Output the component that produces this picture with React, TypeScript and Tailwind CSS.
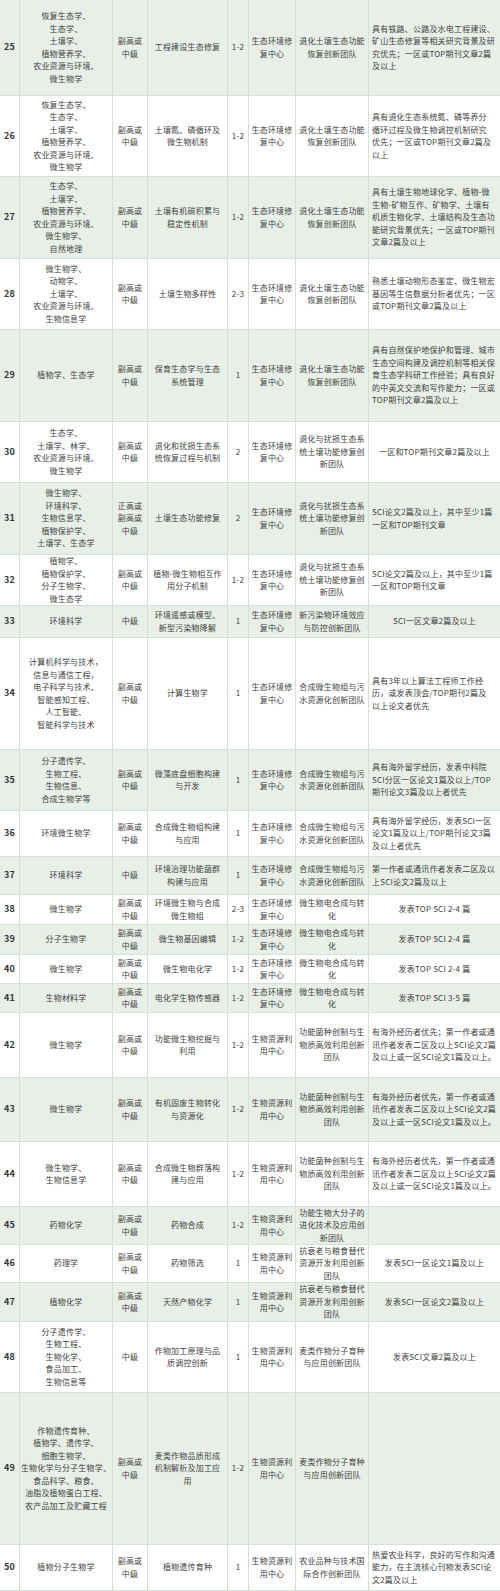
import React from "react";

type Row = {
  n: string;
  h: string;
  c: string[][]; // 7 columns after the number
};

const ZX = ["生态环境修", "复中心"];
const SW = ["生物资源利", "用中心"];
const FG = ["副高或", "中级"];
const TH = ["退化土壤生态功能", "恢复创新团队"];
const TR = ["退化与扰损生态系", "统土壤功能修复创", "新团队"];
const HW = ["合成微生物组与污", "水资源化创新团队"];
const DH = ["微生物电合成与转", "化"];
const GN = ["功能菌种创制与生", "物质高效利用创新", "团队"];
const KS = ["抗衰老与粮食替代", "资源开发利用创新", "团队"];
const MS = ["麦类作物分子育种", "与应用创新团队"];
const HAIWAI = ["有海外经历者优先，第一作者或通", "讯作者发表二区及以上SCI论文2篇", "及以上或一区SCI论文1篇及以上。"];

const rows: Row[] = [
  {
    n: "25",
    h: "h-[96px]",
    c: [
      ["恢复生态学、", "生态学、", "土壤学、", "植物营养学、", "农业资源与环境、", "微生物学"],
      FG,
      ["工程建设生态修复"],
      ["1-2"],
      ZX,
      TH,
      ["具有铁路、公路及水电工程建设、", "矿山生态修复等相关研究背景及研", "究优先；一区或TOP期刊文章2篇", "及以上"],
    ],
  },
  {
    n: "26",
    h: "h-[81px]",
    c: [
      ["恢复生态学、", "生态学、", "土壤学、", "植物营养学、", "农业资源与环境、", "微生物学"],
      FG,
      ["土壤氮、磷循环及", "微生物机制"],
      ["1-2"],
      ZX,
      TH,
      ["具有退化生态系统氮、磷等养分", "循环过程及微生物调控机制研究", "优先；一区或TOP期刊文章2篇及", "以上"],
    ],
  },
  {
    n: "27",
    h: "h-[82px]",
    c: [
      ["生态学、", "土壤学、", "植物营养学、", "农业资源与环境、", "微生物学、", "自然地理"],
      FG,
      ["土壤有机碳积累与", "稳定性机制"],
      ["1-2"],
      ZX,
      TH,
      ["具有土壤生物地球化学、植物-微", "生物-矿物互作、矿物学、土壤有", "机质生物化学、土壤结构及生态功", "能研究背景优先；一区或TOP期刊", "文章2篇及以上"],
    ],
  },
  {
    n: "28",
    h: "h-[71px]",
    c: [
      ["微生物学、", "动物学、", "土壤学、", "农业资源与环境、", "生物信息学"],
      FG,
      ["土壤生物多样性"],
      ["2-3"],
      ZX,
      TH,
      ["熟悉土壤动物形态鉴定、微生物宏", "基因等生信数据分析者优先；一区", "或TOP期刊文章2篇及以上"],
    ],
  },
  {
    n: "29",
    h: "h-[92px]",
    c: [
      ["植物学、生态学"],
      FG,
      ["保育生态学与生态", "系统管理"],
      ["1"],
      ZX,
      TH,
      ["具有自然保护地保护和管理、城市", "生态空间构建及调控机制等相关保", "育生态学科研工作经验；具有良好", "的中英文交流和写作能力；一区或", "TOP期刊文章2篇及以上"],
    ],
  },
  {
    n: "30",
    h: "h-[61px]",
    c: [
      ["生态学、", "土壤学、林学、", "农业资源与环境、", "微生物学"],
      FG,
      ["退化和扰损生态系", "统恢复过程与机制"],
      ["2"],
      ZX,
      TR,
      ["一区和TOP期刊文章2篇及以上"],
    ],
  },
  {
    n: "31",
    h: "h-[72px]",
    c: [
      ["微生物学、", "环境科学、", "生物信息学、", "植物保护学、", "土壤学、生态学"],
      ["正高或", "副高或", "中级"],
      ["土壤生态功能修复"],
      ["2"],
      ZX,
      TR,
      ["SCI论文2篇及以上，其中至少1篇", "一区和TOP期刊文章"],
    ],
  },
  {
    n: "32",
    h: "h-[51px]",
    c: [
      ["植物学、", "植物保护学、", "分子生物学、", "微生态学"],
      FG,
      ["植物-微生物相互作", "用分子机制"],
      ["1-2"],
      ZX,
      TR,
      ["SCI论文2篇及以上，其中至少1篇", "一区和TOP期刊文章"],
    ],
  },
  {
    n: "33",
    h: "h-[32px]",
    c: [
      ["环境科学"],
      ["中级"],
      ["环境遥感或模型、", "新型污染物降解"],
      ["1"],
      ZX,
      ["新污染物环境效应", "与防控创新团队"],
      ["SCI一区文章2篇及以上"],
    ],
  },
  {
    n: "34",
    h: "h-[112px]",
    c: [
      ["计算机科学与技术，", "信息与通信工程，", "电子科学与技术、", "智能感知工程、", "人工智能、", "智能科学与技术"],
      FG,
      ["计算生物学"],
      ["1"],
      ZX,
      HW,
      ["具有3年以上算法工程师工作经", "历，或发表顶会/TOP期刊2篇及", "以上论文者优先"],
    ],
  },
  {
    n: "35",
    h: "h-[61px]",
    c: [
      ["分子遗传学、", "生物工程、", "生物信息、", "合成生物学等"],
      FG,
      ["微藻底盘细胞构建", "与开发"],
      ["1"],
      ZX,
      HW,
      ["具有海外留学经历，发表中科院", "SCI分区一区论文1篇及以上/TOP", "期刊论文3篇及以上者优先"],
    ],
  },
  {
    n: "36",
    h: "h-[46px]",
    c: [
      ["环境微生物学"],
      FG,
      ["合成微生物组构建", "与应用"],
      ["1"],
      ZX,
      HW,
      ["具有海外留学经历，发表SCI一区", "论文1篇及以上/TOP期刊论文3篇", "及以上者优先"],
    ],
  },
  {
    n: "37",
    h: "h-[38px]",
    c: [
      ["环境科学"],
      ["中级"],
      ["环境治理功能菌群", "构建与应用"],
      ["1"],
      ZX,
      HW,
      ["第一作者或通讯作者发表二区及以", "上SCI论文2篇及以上"],
    ],
  },
  {
    n: "38",
    h: "h-[30px]",
    c: [["微生物学"], FG, ["环境微生物与合成", "微生物组"], ["2-3"], ZX, DH, ["发表TOP SCI 2-4 篇"]],
  },
  {
    n: "39",
    h: "h-[30px]",
    c: [["分子生物学"], FG, ["微生物基因编辑"], ["1-2"], ZX, DH, ["发表TOP SCI 2-4 篇"]],
  },
  {
    n: "40",
    h: "h-[29px]",
    c: [["微生物学"], FG, ["微生物电化学"], ["1-2"], ZX, DH, ["发表TOP SCI 2-4 篇"]],
  },
  {
    n: "41",
    h: "h-[29px]",
    c: [["生物材料学"], FG, ["电化学生物传感器"], ["1-2"], ZX, DH, ["发表TOP SCI 3-5 篇"]],
  },
  {
    n: "42",
    h: "h-[65px]",
    c: [
      ["微生物学"],
      FG,
      ["功能微生物挖掘与", "利用"],
      ["1-2"],
      SW,
      GN,
      ["有海外经历者优先；第一作者或通", "讯作者发表二区及以上SCI论文2篇", "及以上或一区SCI论文1篇及以上。"],
    ],
  },
  {
    n: "43",
    h: "h-[64px]",
    c: [["微生物学"], FG, ["有机固废生物转化", "与资源化"], ["1-2"], SW, GN, HAIWAI],
  },
  {
    n: "44",
    h: "h-[65px]",
    c: [["微生物学、", "生物信息学"], FG, ["合成微生物群落构", "建与应用"], ["1-2"], SW, GN, HAIWAI],
  },
  {
    n: "45",
    h: "h-[38px]",
    c: [["药物化学"], FG, ["药物合成"], ["1-2"], SW, ["功能生物大分子的", "进化技术及应用创", "新团队"], []],
  },
  {
    n: "46",
    h: "h-[38px]",
    c: [["药理学"], FG, ["药物筛选"], ["1"], SW, KS, ["发表SCI一区论文1篇及以上"]],
  },
  {
    n: "47",
    h: "h-[39px]",
    c: [["植物化学"], FG, ["天然产物化学"], ["1"], SW, KS, ["发表SCI一区论文2篇及以上"]],
  },
  {
    n: "48",
    h: "h-[71px]",
    c: [
      ["分子遗传学、", "生物工程、", "生物化学、", "食品加工、", "生物信息等"],
      ["中级"],
      ["作物加工原理与品", "质调控创新"],
      ["1"],
      SW,
      MS,
      ["发表SCI文章2篇及以上"],
    ],
  },
  {
    n: "49",
    h: "h-[152px]",
    c: [
      ["作物遗传育种、", "植物学、遗传学、", "细胞生物学、", "生物化学与分子生物学、", "食品科学、粮食、", "油脂及植物蛋白工程、", "农产品加工及贮藏工程"],
      FG,
      ["麦类作物品质形成", "机制解析及加工应", "用"],
      ["1-2"],
      SW,
      MS,
      [],
    ],
  },
  {
    n: "50",
    h: "h-[46px]",
    c: [
      ["植物分子生物学"],
      FG,
      ["植物遗传育种"],
      ["1"],
      SW,
      ["农业品种与技术国", "际合作创新团队"],
      ["热爱农业科学，良好的写作和沟通", "能力，在主流核心刊物发表SCI论", "文2篇及以上"],
    ],
  },
];

function Lines({ lines }: { lines: string[] }) {
  return (
    <>
      {lines.map((l, i) => (
        <div key={i} className="whitespace-nowrap">
          {l}
        </div>
      ))}
    </>
  );
}

export default function App() {
  return (
    <div
      className="w-[500px] bg-white text-[#3d3f3d] text-[8px] leading-[12.5px] tracking-[0.2px]"
      style={{ fontFamily: '"Noto Sans CJK SC", "Noto Sans", sans-serif' }}
    >
      {rows.map((r, idx) => {
        const green = idx % 2 === 0;
        const last = r.c[6];
        const multi = last.length > 1;
        return (
          <div
            key={r.n}
            className={`grid grid-cols-[20px_93px_35px_80px_21px_47px_73px_131px] border-b border-[#d3e1d5] ${r.h} ${
              green ? "bg-[#e8efe7]" : "bg-white"
            }`}
          >
            <div className="flex items-center justify-center border-r border-[#d3e1d5] text-[9px] font-bold text-[#333533]">
              {r.n}
            </div>
            {r.c.slice(0, 6).map((col, ci) => (
              <div
                key={ci}
                className="flex flex-col items-center justify-center border-r border-[#d3e1d5] text-center overflow-hidden"
              >
                <Lines lines={col} />
              </div>
            ))}
            <div
              className={
                multi
                  ? "flex flex-col items-start justify-center pl-[3px] text-left overflow-hidden"
                  : "flex flex-col items-center justify-center text-center overflow-hidden"
              }
            >
              <Lines lines={last} />
            </div>
          </div>
        );
      })}
    </div>
  );
}
